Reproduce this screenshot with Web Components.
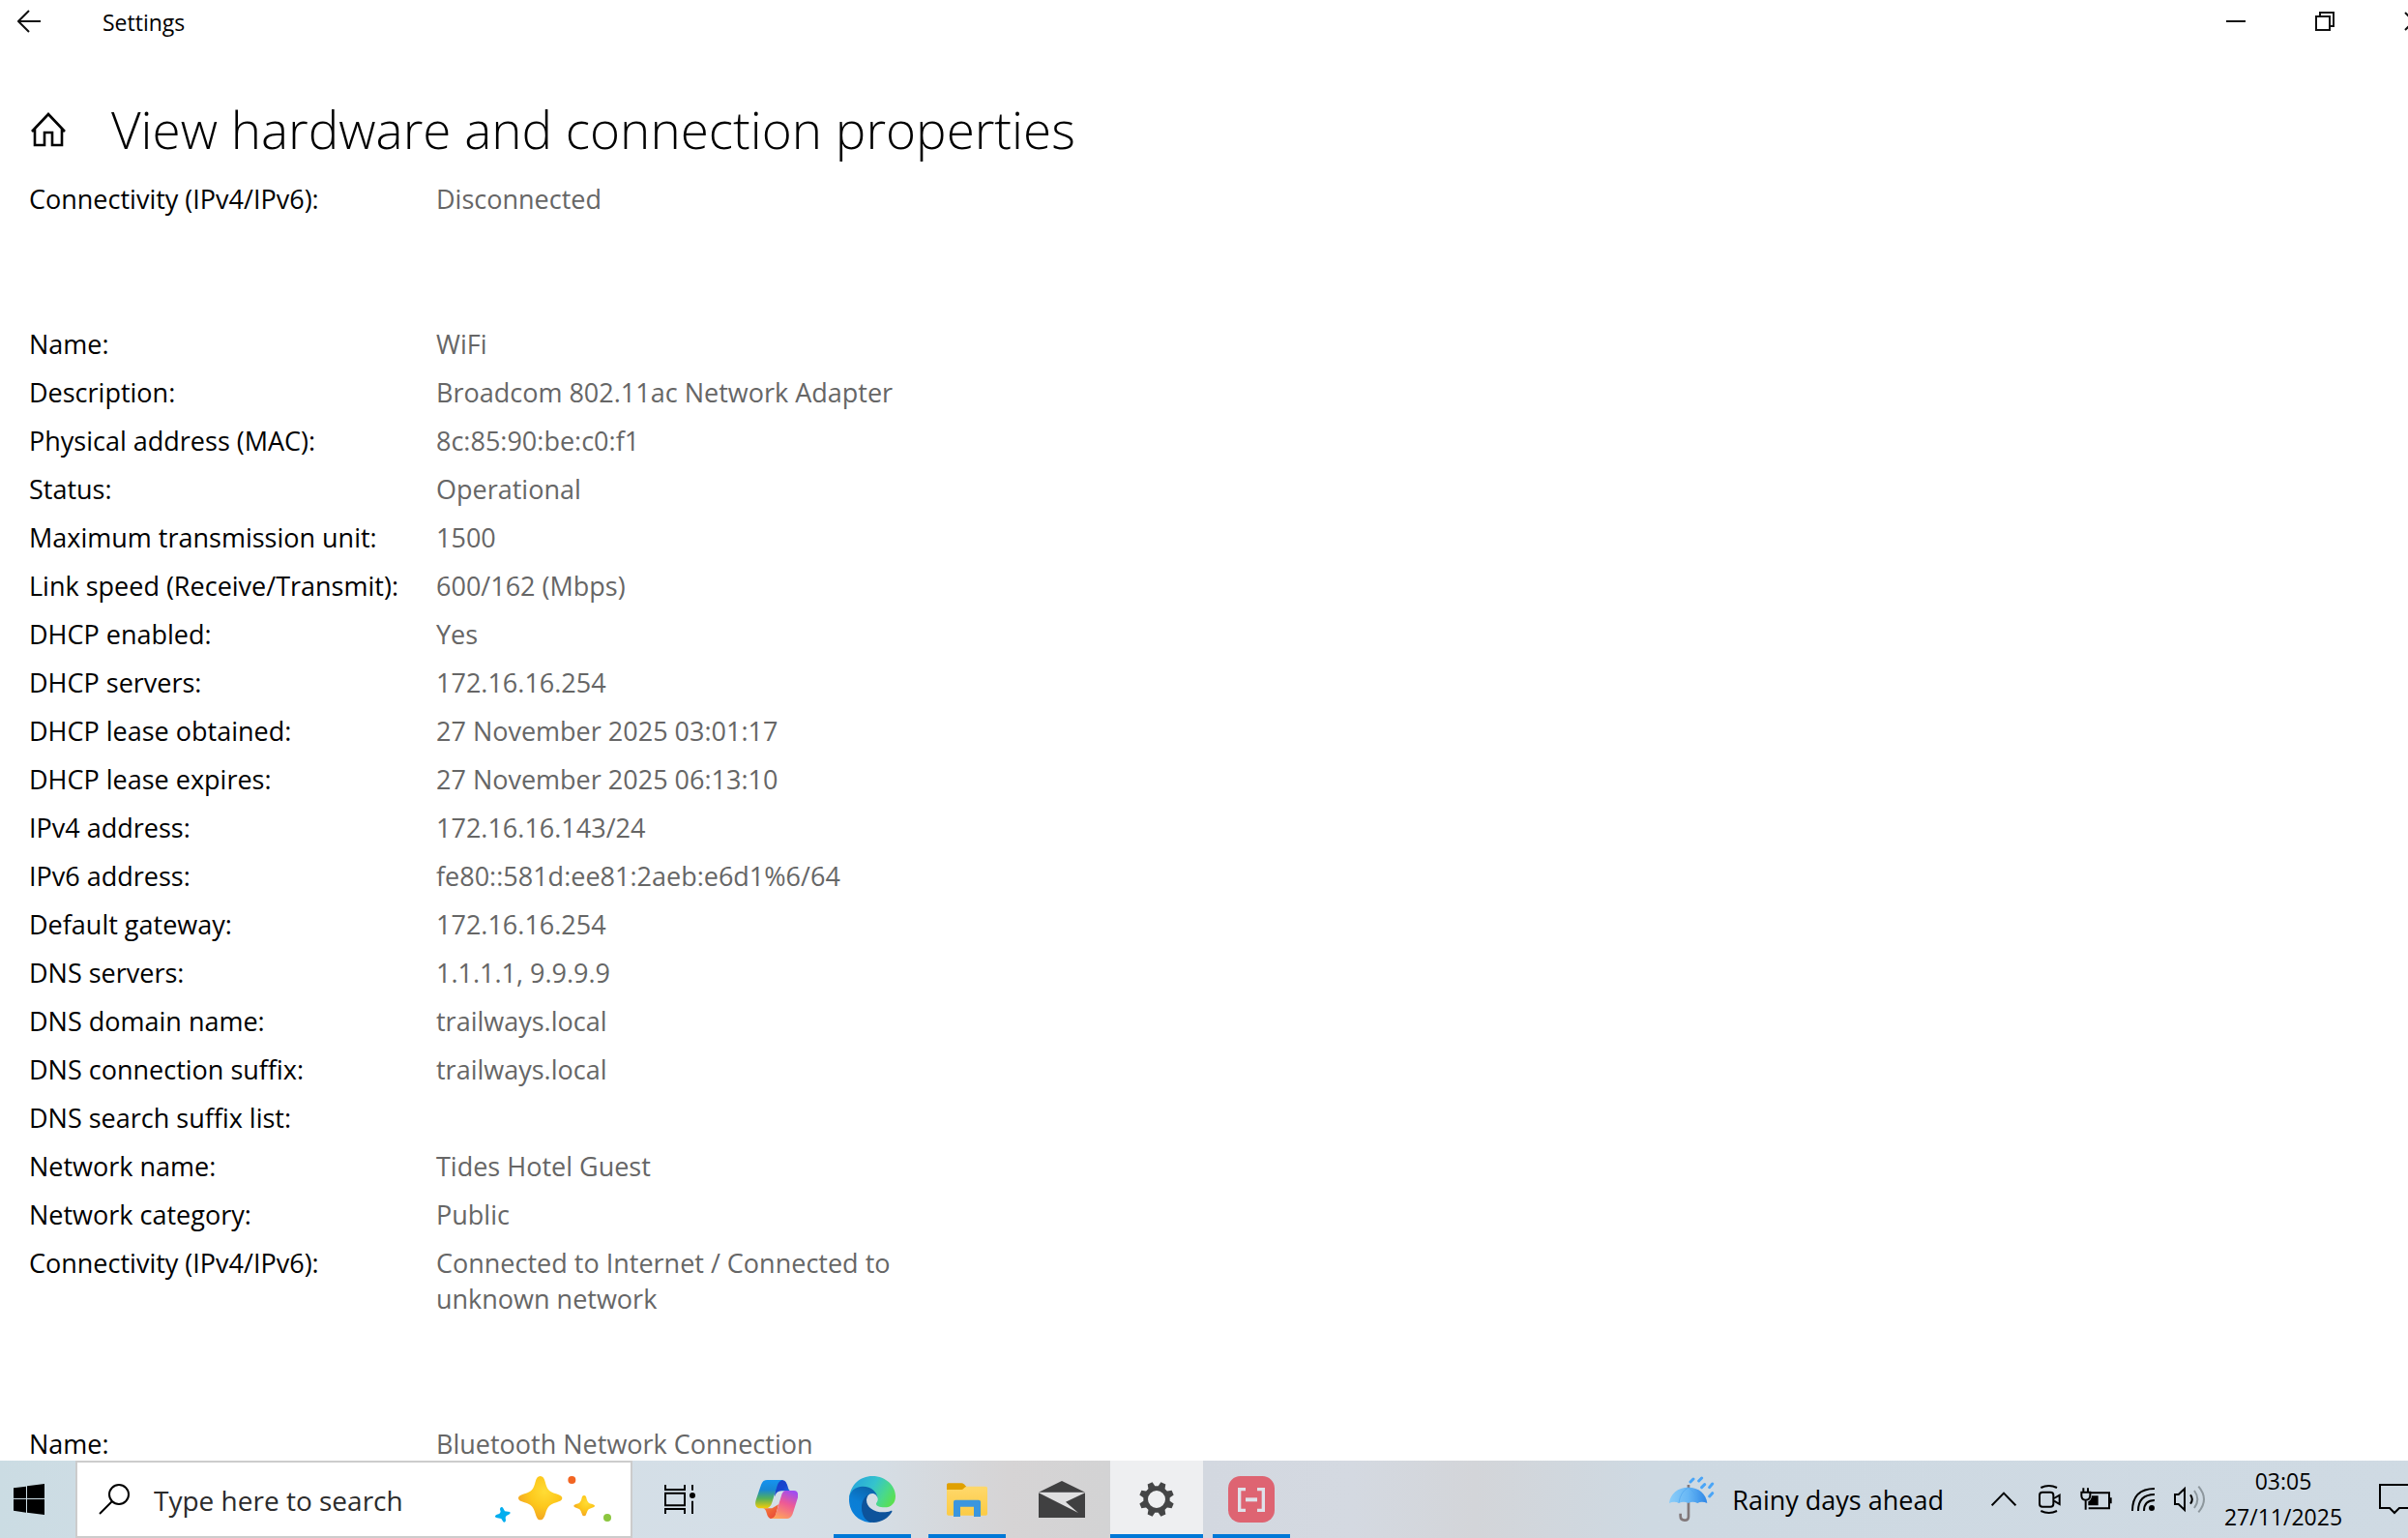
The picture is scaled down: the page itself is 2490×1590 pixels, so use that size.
<!DOCTYPE html>
<html lang="en">
<head>
<meta charset="utf-8">
<title>Settings</title>
<style>
  html, body {
    margin: 0;
    height: 100%;
    overflow: hidden;
    background: #fff;
  }
  body {
    font-family: "Open Sans", "Noto Sans", sans-serif;
    font-size: 27px;
    color: #000;
  }
  svg { display: block; }
</style>
</head>
<body>
<desktop-shell>
  <settings-window heading="View hardware and connection properties">
    <property-group>
      <property-row label="Connectivity (IPv4/IPv6):">Disconnected</property-row>
    </property-group>
    <property-group>
      <property-row label="Name:">WiFi</property-row>
      <property-row label="Description:">Broadcom 802.11ac Network Adapter</property-row>
      <property-row label="Physical address (MAC):">8c:85:90:be:c0:f1</property-row>
      <property-row label="Status:">Operational</property-row>
      <property-row label="Maximum transmission unit:">1500</property-row>
      <property-row label="Link speed (Receive/Transmit):">600/162 (Mbps)</property-row>
      <property-row label="DHCP enabled:">Yes</property-row>
      <property-row label="DHCP servers:">172.16.16.254</property-row>
      <property-row label="DHCP lease obtained:">27 November 2025 03:01:17</property-row>
      <property-row label="DHCP lease expires:">27 November 2025 06:13:10</property-row>
      <property-row label="IPv4 address:">172.16.16.143/24</property-row>
      <property-row label="IPv6 address:">fe80::581d:ee81:2aeb:e6d1%6/64</property-row>
      <property-row label="Default gateway:">172.16.16.254</property-row>
      <property-row label="DNS servers:">1.1.1.1, 9.9.9.9</property-row>
      <property-row label="DNS domain name:">trailways.local</property-row>
      <property-row label="DNS connection suffix:">trailways.local</property-row>
      <property-row label="DNS search suffix list:"></property-row>
      <property-row label="Network name:">Tides Hotel Guest</property-row>
      <property-row label="Network category:">Public</property-row>
      <property-row label="Connectivity (IPv4/IPv6):">Connected to Internet / Connected to unknown network</property-row>
    </property-group>
    <property-group>
      <property-row label="Name:">Bluetooth Network Connection</property-row>
    </property-group>
  </settings-window>

  <task-bar slot="taskbar">
    <task-button label="Task View" wide>
      <svg width="32" height="30" viewBox="798 105 96 90" fill="none" stroke="#000" stroke-width="6">
        <path d="M801 105V120H861V105M801 195V180H861V195M801 131H861V169H801ZM885 105V122M885 155V195"/>
        <circle cx="885" cy="138" r="9" fill="#000" stroke="none"/>
      </svg>
    </task-button>
    <task-button label="Copilot" wide>
      <svg width="44" height="40" viewBox="126 90 132 120">
        <defs>
          <linearGradient id="cpA" x1="0" y1="0" x2="0" y2="1"><stop offset="0" stop-color="#1593ef"/><stop offset=".35" stop-color="#1887d4"/><stop offset=".65" stop-color="#52b05c"/><stop offset="1" stop-color="#f7cc05"/></linearGradient>
          <linearGradient id="cpB" x1="0" y1="0" x2="1" y2="1"><stop offset="0" stop-color="#1b3cc4"/><stop offset=".5" stop-color="#1746d0"/><stop offset="1" stop-color="#2a7be8"/></linearGradient>
          <linearGradient id="cpC" x1=".7" y1="0" x2=".3" y2="1"><stop offset="0" stop-color="#a04cf0"/><stop offset=".45" stop-color="#ee5a95"/><stop offset="1" stop-color="#ffa35c"/></linearGradient>
          <linearGradient id="cpD" x1="0" y1="0" x2="1" y2="1"><stop offset="0" stop-color="#f98a3c"/><stop offset="1" stop-color="#e63f36"/></linearGradient>
        </defs>
        <path fill="url(#cpB)" d="M190 90H206C218 90 222 96 226 108L229 118Q231 124 237 124H207C196 124 190 130 186 142Z"/>
        <path fill="url(#cpD)" d="M198 166L190 196C187 206 184 210 176 210C168 210 164 203 161 192Q158 178 148 178H178Z"/>
        <path fill="url(#cpA)" d="M163 90H211C202 92 197 98 194 108L178 160C174 172 168 178 158 178H140C127 178 124 165 128 152L144 105C148 94 154 90 163 90Z"/>
        <path fill="url(#cpC)" d="M222 123H246C258 123 261 135 257 148L242 195C238 206 232 210 222 210H174C184 208 188 202 191 192L206 142C210 128 214 123 222 123Z"/>
      </svg>
    </task-button>
    <task-button label="Microsoft Edge" running>
      <svg width="48" height="48" viewBox="414 78 144 144">
        <defs>
          <linearGradient id="edA" x1="0" y1=".3" x2="1" y2=".7"><stop offset="0" stop-color="#27a5dc"/><stop offset=".45" stop-color="#34c3cd"/><stop offset=".75" stop-color="#4ad98a"/><stop offset="1" stop-color="#5be04e"/></linearGradient>
          <linearGradient id="edB" x1=".7" y1="0" x2=".3" y2="1"><stop offset="0" stop-color="#0c62a8"/><stop offset=".5" stop-color="#0b7ed4"/><stop offset="1" stop-color="#0a80dc"/></linearGradient>
        </defs>
        <path fill="url(#edA)" d="M414 147C418 105 448 78 486 78C530 78 558 110 558 140C558 162 544 175 524 175C508 175 498 170 498 165C498 160 504 158 503 148C499 115 440 94 414 147Z"/>
        <path fill="url(#edB)" d="M414 150C414 125 434 110 456 110C484 110 503 128 503 150C503 140 495 132 486 132C474 132 468 142 468 152L466 205L486 222C442 222 414 190 414 150Z"/>
        <path fill="#0d539b" d="M480 133C463 138 453 156 453 176C453 202 468 222 490 222C515 221 536 208 547 189C548 185 546 184 543 186C536 189 529 190 520 190C490 190 468 174 468 152C468 142 473 135 480 133Z"/>
      </svg>
    </task-button>
    <task-button label="File Explorer" running>
      <svg width="42" height="35" viewBox="717 97 126 105">
        <defs><linearGradient id="fx" x1="0" y1="0" x2="0" y2="1"><stop offset="0" stop-color="#ffd86b"/><stop offset="1" stop-color="#fccb45"/></linearGradient></defs>
        <path fill="#e0a000" d="M717 103Q717 98 722 98H763Q767 98 770 101L779 110V125H717Z"/>
        <path fill="url(#fx)" d="M717 118H763Q768 118 771 113Q774 108 780 108H838Q843 108 843 113V193Q843 198 838 198H722Q717 198 717 193Z"/>
        <path fill="#3b96de" d="M738 202V156Q738 150 744 150H816Q822 150 822 156V202H801V171H759V202Z"/>
      </svg>
    </task-button>
    <task-button label="Mail">
      <svg width="48" height="38" viewBox="102 93 144 114">
        <path fill="#e0e0e1" d="M102 128H246L186 158L225 192Z"/>
        <path fill="#404041" d="M102 128L174 93L246 128ZM102 130L225 192L186 158L246 130V207H102Z"/>
      </svg>
    </task-button>
    <task-button label="Settings" running active>
      <svg width="36" height="36" viewBox="-54 -54 108 108" fill="#444546">
        <circle r="34" fill="none" stroke="#444546" stroke-width="14"/>
        <path transform="rotate(22.5)" d="M-12 -36L-8 -54H8L12 -36Z"/>
        <path transform="rotate(67.5)" d="M-12 -36L-8 -54H8L12 -36Z"/>
        <path transform="rotate(112.5)" d="M-12 -36L-8 -54H8L12 -36Z"/>
        <path transform="rotate(157.5)" d="M-12 -36L-8 -54H8L12 -36Z"/>
        <path transform="rotate(202.5)" d="M-12 -36L-8 -54H8L12 -36Z"/>
        <path transform="rotate(247.5)" d="M-12 -36L-8 -54H8L12 -36Z"/>
        <path transform="rotate(292.5)" d="M-12 -36L-8 -54H8L12 -36Z"/>
        <path transform="rotate(337.5)" d="M-12 -36L-8 -54H8L12 -36Z"/>
      </svg>
    </task-button>
    <task-button label="Screen capture" running>
      <svg width="48" height="48" viewBox="690 78 144 144">
        <rect x="690" y="78" width="144" height="144" rx="38" fill="#de6472"/>
        <path d="M744 119H725V184H744M780 119H799V184H780" fill="none" stroke="#dfe2ea" stroke-width="10"/>
        <path d="M744 151H780" stroke="#dfe2ea" stroke-width="12"/>
      </svg>
    </task-button>
  </task-bar>
</desktop-shell>

<script>
(function () {
  function define(name, html, setup) {
    const template = document.createElement("template");
    template.innerHTML = html;

    window.customElements.define(name, class extends HTMLElement {
      constructor() {
        super();
        this.attachShadow({ mode: "open" });
        this.shadowRoot.appendChild(template.content.cloneNode(true));
      }

      connectedCallback() {
        if (setup) setup(this, this.shadowRoot);
      }
    });
  }

  // The desktop runs a little past the right edge of the viewport
  define("desktop-shell", `
  <style>
  :host {
    display: grid;
    grid-template-rows: minmax(0, 1fr) 80px;
    height: 100vh;
    margin-right: -52px;
  }
  </style>
  <slot></slot>
  <slot name="taskbar"></slot>
  `);

  define("title-bar", `
  <style>
  :host {
    display: flex;
    flex: none;
    align-items: center;
    height: 46px;
    font-size: 23px;
  }
  button {
    display: flex;
    align-items: center;
    justify-content: center;
    width: 92px;
    height: 44px;
    padding: 0;
    border: 0;
    background: none;
  }
  .back {
    justify-content: flex-start;
    width: 106px;
    padding-left: 18px;
  }
  .title { flex: 1; }
  svg {
    fill: none;
    stroke: #111;
    stroke-width: 2;
  }
  </style>
  <button class="back" aria-label="Back">
    <svg width="25" height="26" viewBox="0 0 25 26"><path d="M12 1L1 12L12 23M1 12H24"/></svg>
  </button>
  <span class="title"><slot></slot></span>
  <button aria-label="Minimise"><svg width="20" height="22"><path d="M0 10H20"/></svg></button>
  <button aria-label="Restore"><svg width="20" height="22"><path d="M1 5H15V19H1ZM5 5V1H19V15H15"/></svg></button>
  <button aria-label="Close"><svg width="20" height="22"><path d="M1 1L19 19M19 1L1 19"/></svg></button>
  `);

  define("settings-window", `
  <style>
  :host {
    display: flex;
    flex-direction: column;
    min-height: 0;
    overflow: hidden;
  }
  header {
    display: flex;
    flex: none;
    align-items: center;
    gap: 45px;
    padding: 52px 30px 17px;
  }
  header button {
    padding: 0;
    border: 0;
    background: none;
  }
  header svg { display: block; }
  h1 {
    margin: 0;
    font-size: 53px;
    font-weight: 350;
    line-height: 72px;
  }
  main {
    display: flex;
    flex: none;
    flex-direction: column;
    gap: 113px;
    padding: 0 30px;
  }
  </style>
  <title-bar>Settings</title-bar>
  <header>
    <button aria-label="Home">
      <svg width="40" height="36" viewBox="0 0 40 36" fill="none" stroke="#000" stroke-width="2.6">
        <path d="M3 20L20 2L37 20M6 17V34H16V21H24V34H34V17"/>
      </svg>
    </button>
    <h1></h1>
  </header>
  <main><slot></slot></main>
  `, function (host, root) {
    root.querySelector("h1").textContent = host.getAttribute("heading");
  });

  define("property-group", `
  <style>
  :host {
    display: flex;
    flex-direction: column;
    gap: 13px;
  }
  </style>
  <slot></slot>
  `);

  define("property-row", `
  <style>
  :host {
    display: grid;
    grid-template-columns: 421px minmax(0, 480px);
    line-height: 37px;
  }
  .value { color: #666; }
  </style>
  <span class="label"></span>
  <span class="value"><slot></slot></span>
  `, function (host, root) {
    root.querySelector(".label").textContent = host.getAttribute("label");
  });

  define("task-button", `
  <style>
  :host { display: flex; }
  button {
    display: flex;
    align-items: center;
    justify-content: center;
    width: 96px;
    padding: 0;
    border: 0;
    background: none;
  }
  :host([wide]) button { width: 98px; }
  :host([running]) button {
    background: linear-gradient(#0078d7, #0078d7) bottom / 80px 4px no-repeat;
  }
  :host([active]) button {
    background: linear-gradient(#0078d7, #0078d7) bottom / 100% 4px no-repeat #eeeff1;
  }
  </style>
  <button><slot></slot></button>
  `, function (host, root) {
    root.querySelector("button").setAttribute("aria-label", host.getAttribute("label"));
  });

  define("search-box", `
  <style>
  :host {
    display: flex;
    align-items: center;
    box-sizing: border-box;
    width: 576px;
    padding: 0 20px 0 22px;
    border: 2px solid #ccc;
    background: #fff;
  }
  label { margin-right: 25px; }
  input {
    flex: 1;
    min-width: 0;
    padding: 2px 0 0;
    border: 0;
    outline: 0;
    background: none;
    font: inherit;
    font-size: 28px;
  }
  input::placeholder {
    color: #2b2b2b;
    opacity: 1;
  }
  svg { display: block; }
  </style>
  <label for="q" aria-label="Search">
    <svg width="32" height="32" viewBox="0 0 32 32" fill="none" stroke="#000" stroke-width="2">
      <circle cx="21" cy="11" r="10"/><path d="M14 18L1 31"/>
    </svg>
  </label>
  <input id="q" type="text" placeholder="Type here to search">
  <svg width="120" height="48" viewBox="276 78 360 144">
    <defs>
      <radialGradient id="star" cx=".6" cy=".35" r=".7"><stop offset="0" stop-color="#ffdc35"/><stop offset=".5" stop-color="#fdc81c"/><stop offset="1" stop-color="#f2a224"/></radialGradient>
    </defs>
    <path fill="url(#star)" d="M416 78C424 78 428 85 431 95C437 119 443 126 465 133C477 137 484 140 484 147C484 153 477 156 466 160C444 166 438 174 432 195C428 207 424 214 416 214C408 214 405 207 401 195C395 174 389 166 367 160C355 156 348 153 348 147C348 140 355 137 367 133C389 126 395 119 401 95C404 85 408 78 416 78Z"/>
    <path fill="url(#star)" d="M552 138C557 138 559 143 560 149C563 159 566 162 575 164C581 166 585 168 585 170C585 173 581 175 575 177C566 179 563 183 560 192C558 198 557 202 552 202C547 202 546 198 544 192C541 183 538 179 529 177C523 175 520 173 520 170C520 168 523 166 529 164C538 162 541 159 544 149C545 143 547 138 552 138Z"/>
    <path fill="#03aeef" d="M294 175Q298 172 301 178L306 187L316 188Q324 188 323 193Q322 197 311 201L308 206L309 216Q307 224 301 220L295 210L283 208Q275 206 276 202Q277 198 289 195L293 189L291 181Q291 177 294 175Z"/>
    <circle cx="514" cy="90" r="12" fill="#f26522"/>
    <circle cx="624" cy="207" r="12" fill="#8cc63f"/>
  </svg>
  `);

  define("weather-widget", `
  <style>
  :host { display: flex; }
  button {
    display: flex;
    align-items: center;
    gap: 18px;
    padding: 0;
    border: 0;
    background: none;
    color: inherit;
    font: inherit;
  }
  </style>
  <button>
    <svg width="47" height="48" viewBox="93 80 141 144">
      <defs><linearGradient id="um"><stop offset="0" stop-color="#8ccdf8"/><stop offset=".5" stop-color="#67b7f5"/><stop offset="1" stop-color="#2e86e6"/></linearGradient></defs>
      <path d="M153 107V206Q153 217 141 217Q128 217 128 204V196" fill="none" stroke="#81787a" stroke-width="8"/>
      <path fill="url(#um)" d="M93 164C96 135 120 115 152 115C185 115 208 135 211 164Q194 156 181 164Q166 157 152 164Q138 157 123 164Q109 156 93 164Z"/>
      <path d="M152 116Q128 128 123 163M152 116Q177 128 181 163" fill="none" stroke="#4ea4ee" stroke-width="2"/>
      <path d="M159 98L168 89M185 95L194 86M194 115L203 106M218 115L227 104M218 143L227 133" stroke="#4aa5f7" stroke-width="9" stroke-linecap="round"/>
    </svg>
    <span>Rainy days ahead</span>
  </button>
  `);

  define("system-tray", `
  <style>
  :host {
    display: flex;
    align-items: center;
  }
  button {
    display: flex;
    align-items: center;
    justify-content: center;
    width: 48px;
    height: 80px;
    padding: 0;
    border: 0;
    background: none;
    color: inherit;
    font: inherit;
  }
  .clock {
    flex-direction: column;
    width: 138px;
    margin-left: 4px;
    font-size: 23px;
    line-height: 37px;
  }
  .action { width: 96px; }
  .peek { width: 16px; }
  svg {
    fill: none;
    stroke: #000;
    stroke-width: 6;
  }
  </style>
  <button aria-label="Show hidden icons">
    <svg width="26" height="16" viewBox="87 126 78 48"><path d="M89 169L126 131L163 169"/></svg>
  </button>
  <button aria-label="Meet Now">
    <svg width="24" height="32" viewBox="238 102 72 96"><rect x="241" y="128" width="43" height="45" rx="9"/><path d="M286 147L303 137V165L286 155M245 114Q270 102 295 114M245 186Q270 198 295 186"/></svg>
  </button>
  <button aria-label="Battery">
    <svg width="34" height="24" viewBox="364 113 102 72"><path d="M396 129H454V177H390M374 114V126M388 114V126M368 127H395V137Q395 151 381 151Q368 151 368 137ZM381 151V181"/><path stroke="none" fill="#000" d="M400 138H420V168H389V156Q399 152 400 138ZM456 144H462V162H456Z"/></svg>
  </button>
  <button aria-label="Network">
    <svg width="26" height="26" viewBox="525 117 78 78"><path d="M531 192Q531 123 600 123M549 192Q549 141 600 141M567 192Q567 159 600 159"/><circle cx="591" cy="183" r="9" fill="#000" stroke="none"/></svg>
  </button>
  <button aria-label="Volume">
    <svg width="34" height="30" viewBox="651 105 102 90"><path d="M657 135H668L687 117V183L668 165H657Z"/><path d="M705 136Q716 150 705 164"/><path stroke="#8d979d" d="M717 123Q737 150 717 177M730 110Q764 150 730 190"/></svg>
  </button>
  <button class="clock"><span>03:05</span><span>27/11/2025</span></button>
  <button class="action" aria-label="Notifications">
    <svg width="36" height="32" viewBox="540 102 108 96"><path d="M543 105H645V177H603L588 192L573 177H543Z"/></svg>
  </button>
  <button class="peek" aria-label="Show desktop"></button>
  `);

  define("task-bar", `
  <style>
  :host {
    display: flex;
    background: linear-gradient(90deg, #cbdce3 0, #d1dde6 9%, #d5dfe7 32%, #d5dde4 36%, #d6d4d5 41%, #d3d3d4 45%, #d3d8e0 49%, #d4d9e1 55%, #d3d5d9 60%, #ced9e2 67%, #cfdae3 100%);
  }
  .start {
    display: flex;
    align-items: center;
    width: 78px;
    padding: 0 0 0 14px;
    border: 0;
    background: none;
  }
  nav {
    display: flex;
    flex: 1;
    gap: 2px;
  }
  system-tray { margin-left: 38px; }
  </style>
  <button class="start" aria-label="Start">
    <svg width="32" height="32" viewBox="0 0 96 96"><path d="M0 13L39 8V45H0ZM42 7L96 0V45H42ZM0 48H39V89L0 83ZM42 48H96V96L42 89Z"/></svg>
  </button>
  <search-box></search-box>
  <nav><slot></slot></nav>
  <weather-widget></weather-widget>
  <system-tray></system-tray>
  `);
})();
</script>
</body>
</html>
